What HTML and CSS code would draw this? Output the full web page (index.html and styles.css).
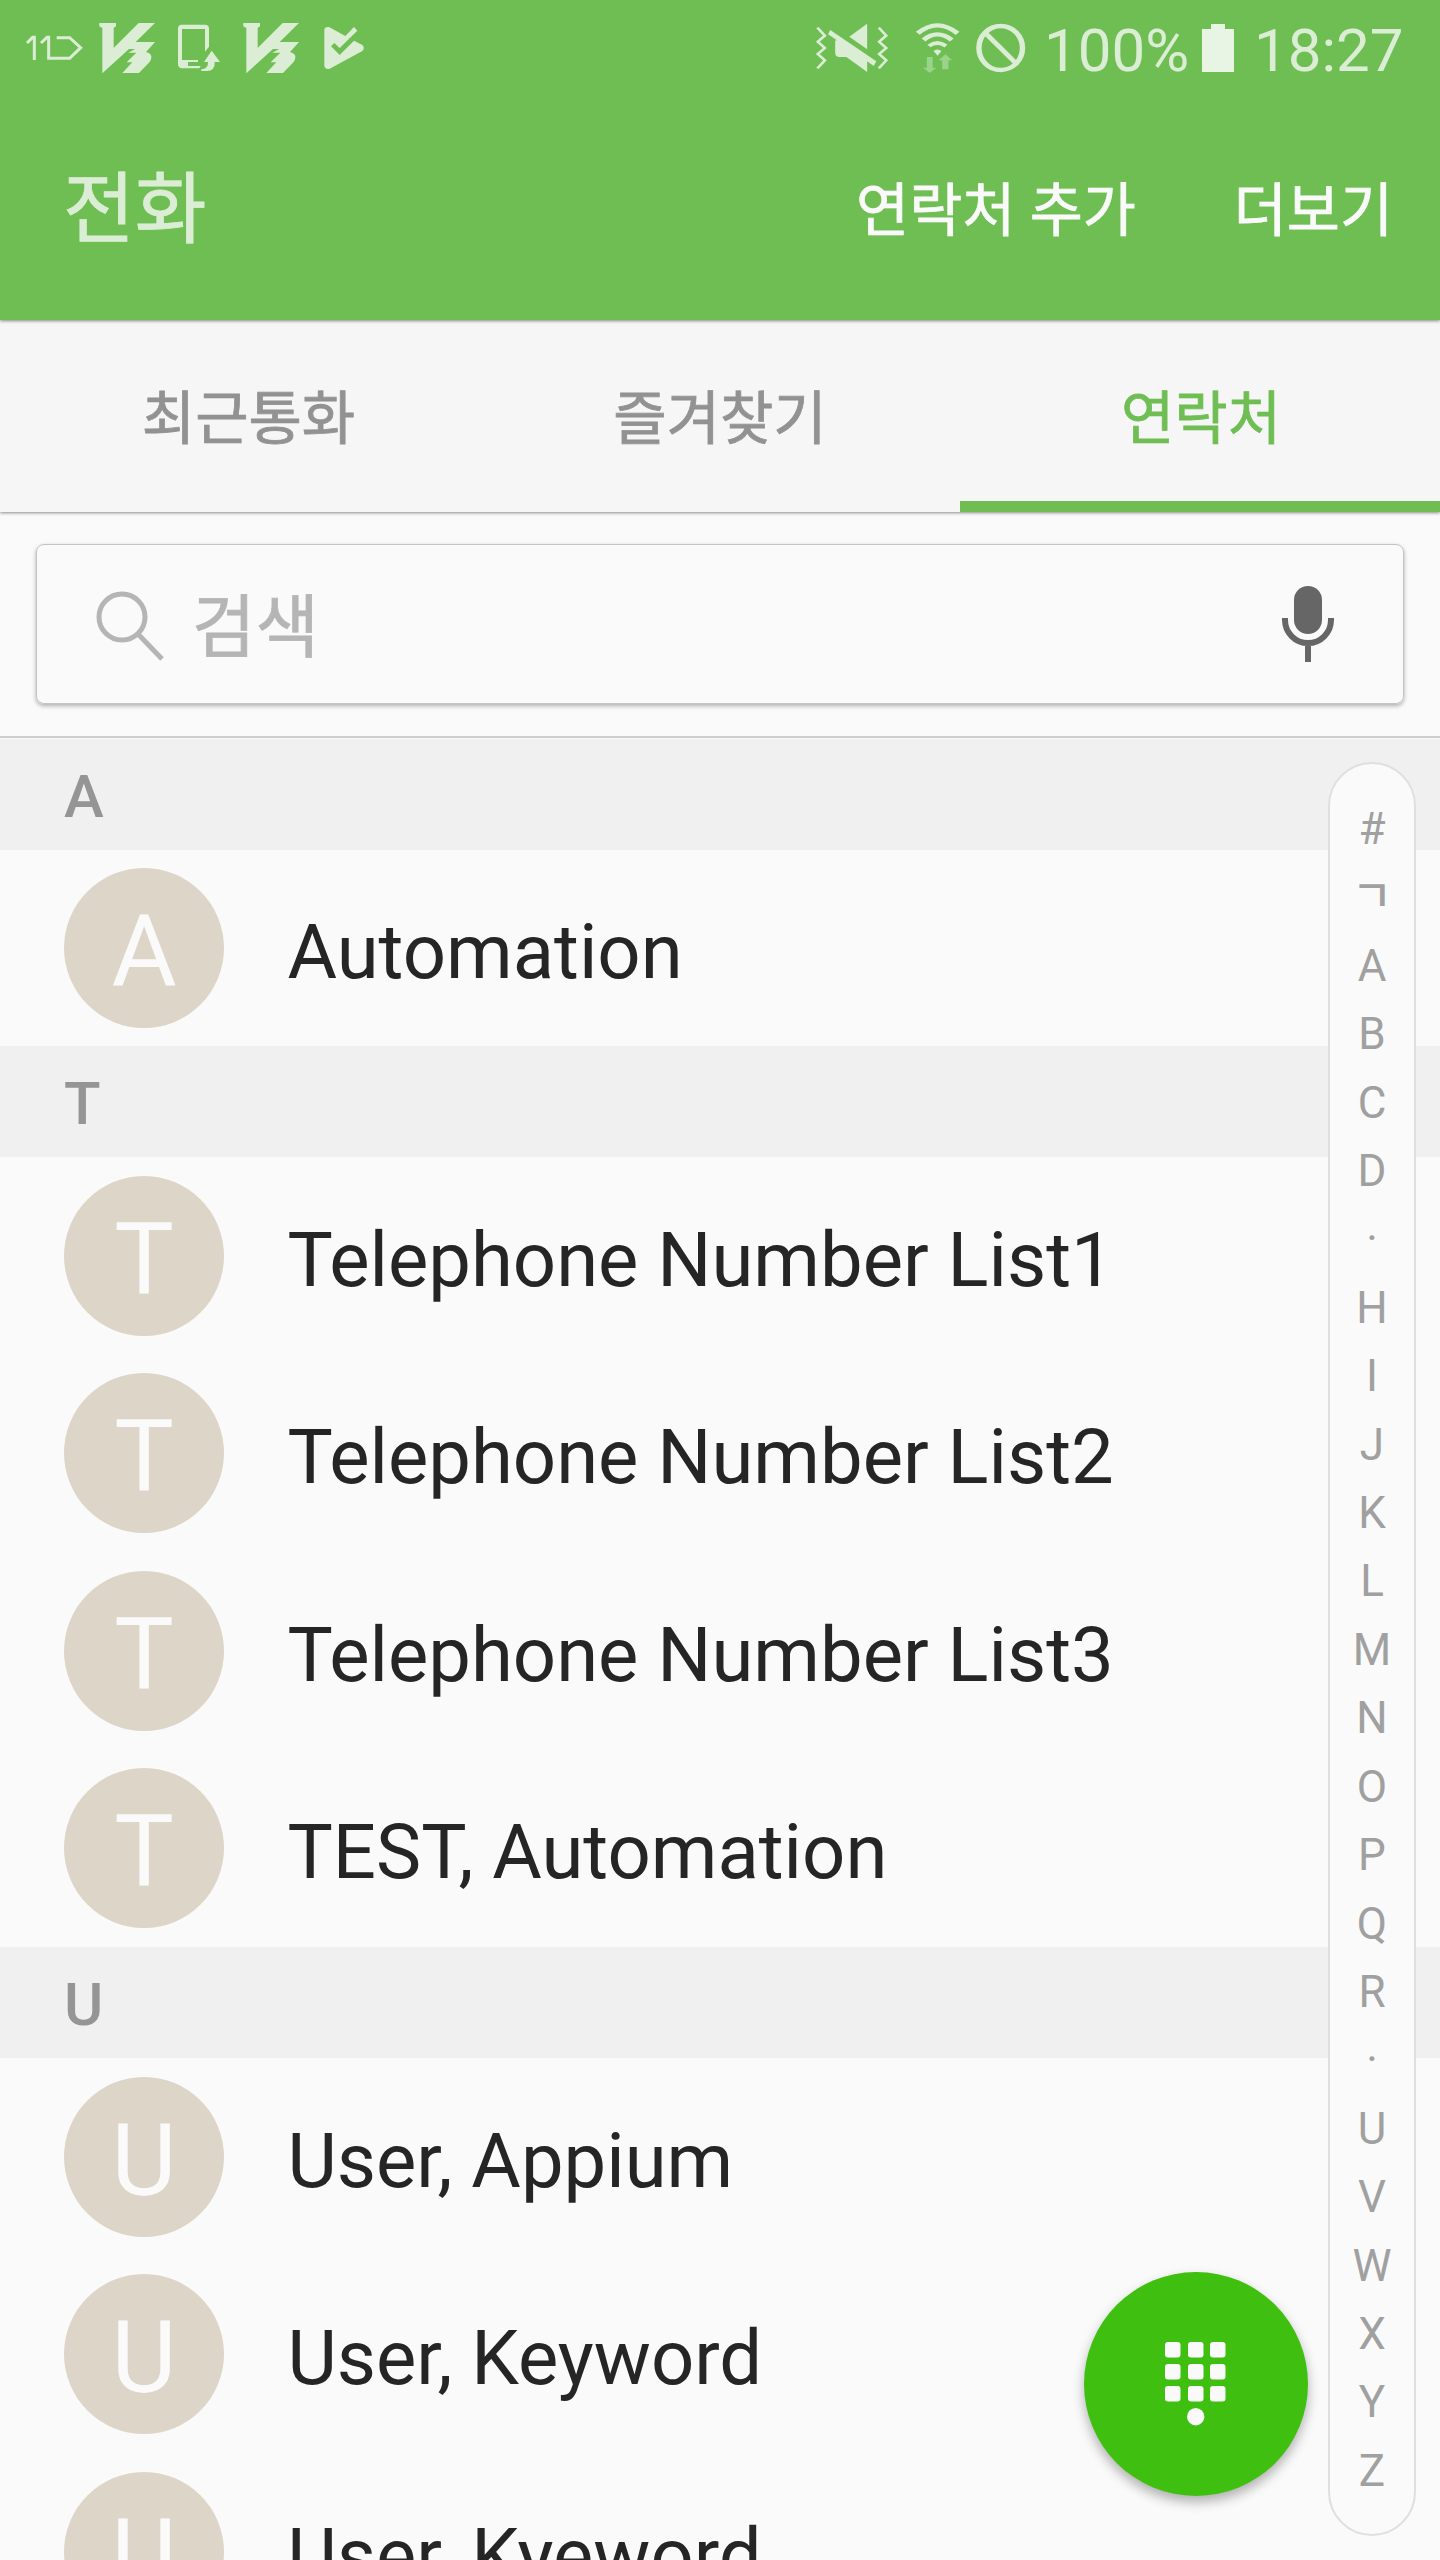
FILE: index.html
```html
<!DOCTYPE html>
<html lang="ko">
<head>
<meta charset="utf-8">
<title>전화</title>
<link rel="stylesheet" href="styles.css">
</head>
<body>
<div class="phone">
  <header class="top">
    <div class="status">
      <svg class="notifications" width="400" height="100" viewBox="0 0 1200 300">
        <g fill="none" stroke="#dbeed5" stroke-width="9">
          <path d="M81 129L98 112H103V180M123 129L141 112H146V175H209L242 143L209 113H170"/>
        </g>
        <g fill="#dbeed5">
          <path id="vs" d="M298 69H348V79L341 84V144L416 69H465L407 126H465L438 156C450 160 455 164 454 173Q453 182 446 189L417 219H367L397 187H380L409 158H385L405 147H387L307 220V84L298 79Z"/>
          <use href="#vs" x="432"/>
          <path fill-rule="evenodd" d="M545 74H615Q627 74 627 86V140L615 155V87H546V180H594V186H564V198H602L598 205H546Q534 204 534 193V86Q534 74 545 74Z"/>
          <path d="M635 152L660 186H644Q646 214 618 213H604V208Q625 207 624 186H612Z"/>
          <path d="M973 90Q974 79 987 81L1036 108L1062 81L1072 92L1019 144L1003 129L993 139L1019 165L1062 122L1087 135Q1096 144 1087 153L989 206Q976 209 973 198Z"/>
        </g>
      </svg>
      <div class="indicators">
        <svg width="236" height="100" viewBox="0 0 569 300" preserveAspectRatio="none" fill="#dbeed5">
          <g fill="none" stroke="#dbeed5" stroke-width="7">
            <path d="M66 83L84 107L67 125L84 144L67 162L84 181L66 205"/>
            <path d="M214 83L232 107L215 125L232 144L215 162L232 181L214 205"/>
          </g>
          <path d="M186 71V148L143 110ZM109 122L118 117L186 183V216L136 171H118Q109 169 109 158Z"/>
          <path d="M97 90L208 184L202 198L92 103Z"/>
          <g fill="none" stroke="#dbeed5">
            <path stroke-width="13" d="M308 100Q355 52 404 100M322 120Q355 86 390 120"/>
            <path stroke-width="11" d="M335 138Q355 120 376 138"/>
            <ellipse stroke-width="13" cx="508" cy="144" rx="52.500" ry="66"/>
            <path stroke-width="13" d="M472 100L544 189"/>
          </g>
          <path d="M346 153Q355 144 365 153L356 167Z"/>
          <path fill="#9cd38a" d="M330 171H344V203H353L337 219L321 203H330ZM375 163L391 181H382V208H367V181H358Z"/>
        </svg>
        <span class="battery-level">100%</span>
        <svg class="battery" width="32" height="48" viewBox="0 0 32 48" fill="#e8f4e4"><path d="M9 0H23V5H32V48H0V5H9Z"/></svg>
        <time>18:27</time>
      </div>
    </div>
    <div class="appbar">
      <h1>전화</h1>
      <nav class="actions"><a>연락처 추가</a><a>더보기</a></nav>
    </div>
  </header>
  <nav class="tabs">
    <a class="tab recent">최근통화</a>
    <a class="tab">즐겨찾기</a>
    <a class="tab active">연락처</a>
  </nav>
  <div class="search-area">
    <div class="search">
      <svg class="lens" width="70" height="72" viewBox="0 0 70 72" fill="none" stroke="#b5b5b5"><circle cx="26" cy="26" r="23" stroke-width="5"/><path d="M42 43L66 68" stroke-width="5"/></svg>
      <span class="hint">검색</span>
      <svg class="mic" width="54" height="76" viewBox="0 0 54 76" fill="none" stroke="#666" stroke-width="6"><rect x="13" y="0" width="28" height="48" rx="14" fill="#666" stroke="none"/><path d="M4 32V34A23 23 0 0 0 50 34V32M27 57V76"/></svg>
    </div>
  </div>
  <main class="contacts">
    <h2 class="section">A</h2>
    <div class="row single"><span class="avatar">A</span><span class="name">Automation</span></div>
    <h2 class="section">T</h2>
    <div class="row"><span class="avatar">T</span><span class="name">Telephone Number List1</span></div>
    <div class="row"><span class="avatar">T</span><span class="name">Telephone Number List2</span></div>
    <div class="row"><span class="avatar">T</span><span class="name">Telephone Number List3</span></div>
    <div class="row"><span class="avatar">T</span><span class="name">TEST, Automation</span></div>
    <h2 class="section">U</h2>
    <div class="row"><span class="avatar">U</span><span class="name">User, Appium</span></div>
    <div class="row"><span class="avatar">U</span><span class="name">User, Keyword</span></div>
    <div class="row"><span class="avatar">U</span><span class="name">User, Kyeword</span></div>
  </main>
  <div class="index">
    <span>#</span><span class="jamo">ㄱ</span><span>A</span><span>B</span><span>C</span><span>D</span><span>·</span><span>H</span><span>I</span><span>J</span><span>K</span><span>L</span><span>M</span><span>N</span><span>O</span><span>P</span><span>Q</span><span>R</span><span>·</span><span>U</span><span>V</span><span>W</span><span>X</span><span>Y</span><span>Z</span>
  </div>
  <button class="dial" aria-label="키패드">
    <svg width="62" height="84" viewBox="0 0 62 84" fill="#fafafa">
      <rect x="0" y="0" width="15.500" height="15.500" rx="3"/><rect x="23" y="0" width="15.500" height="15.500" rx="3"/><rect x="45" y="0" width="15.500" height="15.500" rx="3"/>
      <rect x="0" y="22" width="15.500" height="15.500" rx="3"/><rect x="23" y="22" width="15.500" height="15.500" rx="3"/><rect x="45" y="22" width="15.500" height="15.500" rx="3"/>
      <rect x="0" y="44" width="15.500" height="15.500" rx="3"/><rect x="23" y="44" width="15.500" height="15.500" rx="3"/><rect x="45" y="44" width="15.500" height="15.500" rx="3"/>
      <circle cx="30.700" cy="74.700" r="8.700"/>
    </svg>
  </button>
</div>
</body>
</html>
```
FILE: styles.css
```css
* { box-sizing: border-box; }
body {
  margin: 0;
  font-family: Roboto, "Noto Sans CJK KR", sans-serif;
  background: #fafafa;
}
h1, h2 { margin: 0; font-weight: 400; }
.phone {
  position: relative;
  width: 1440px;
  height: 2560px;
  overflow: hidden;
  background: #fafafa;
}
.top {
  position: relative;
  height: 320px;
  background: #6fbe53;
  box-shadow: 0 1px 3px rgba(0, 0, 0, .45);
  z-index: 1;
}
.status {
  display: flex;
  justify-content: space-between;
  height: 100px;
  color: #dbeed5;
}
.indicators {
  display: flex;
  align-items: flex-start;
  width: 650px;
  font-size: 60px;
  line-height: 101px;
}
.battery-level { width: 154px; padding-left: 18px; }
.battery-level, time { white-space: nowrap; }
.battery { margin: 24px 20px 0 22px; }
.appbar {
  display: flex;
  justify-content: space-between;
  align-items: center;
  height: 222px;
  padding: 0 47px 0 63px;
}
.appbar h1 {
  font-size: 78px;
  -webkit-text-stroke: .8px currentColor;
  line-height: 100px;
  color: #dbeed5;
}
.actions {
  display: flex;
  gap: 98px;
  font-size: 57.700px;
  -webkit-text-stroke: .8px currentColor;
  line-height: 100px;
  color: #fafafa;
}
.tabs {
  position: relative;
  display: grid;
  grid-template-columns: repeat(3, 1fr);
  height: 192px;
  background: #f6f6f6;
  box-shadow: 0 1px 3px rgba(0, 0, 0, .45);
}
.tab {
  display: flex;
  align-items: center;
  justify-content: center;
  font-size: 58px;
  -webkit-text-stroke: .8px currentColor;
  line-height: 100px;
  color: #929292;
  padding-top: 17px;
  border-bottom: 11px solid transparent;
}
.tab.recent { padding-left: 17px; }
.tab.active {
  color: #6fbe53;
  border-bottom-color: #6fbe53;
  padding-left: 2px;
}
.search-area {
  height: 226px;
  padding: 32px 36px 0;
  border-bottom: 2px solid #cdcdcd;
}
.search {
  display: flex;
  align-items: center;
  height: 160px;
  padding: 0 68px 0 59px;
  border: 1px solid #c4c4c4;
  border-radius: 8px;
  box-shadow: 0 2px 4px rgba(0, 0, 0, .3);
}
.lens { margin-top: 6px; }
.hint {
  flex: 1;
  margin-left: 26px;
  padding-top: 9px;
  font-size: 69px;
  -webkit-text-stroke: .8px currentColor;
  line-height: 100px;
  color: #b5b5b5;
}
.contacts { padding-top: 1px; }
.section {
  height: 111px;
  padding-left: 64px;
  background: #f0f0f0;
  color: #959595;
  font-size: 60px;
  font-weight: 500;
  line-height: 116px;
}
.row {
  display: flex;
  height: 197.500px;
  padding: 18.500px 0 0 64px;
}
.row.single { height: 196px; padding-top: 18px; }
.avatar {
  width: 160px;
  height: 160px;
  border-radius: 50%;
  background: #dcd5c8;
  color: #fafafa;
  font-size: 100px;
  line-height: 167px;
  text-align: center;
}
.name {
  margin-left: 63.500px;
  font-size: 76px;
  line-height: 168px;
  color: #252525;
}
.index {
  position: absolute;
  left: 1328px;
  top: 762px;
  width: 88px;
  height: 1774px;
  padding-top: 31px;
  border: 2px solid #dfdfdf;
  border-radius: 44px;
  background: #fafafa;
  color: #a0a0a0;
  display: flex;
  flex-direction: column;
  align-items: center;
  font-size: 44px;
}
.index span { height: 68.420px; line-height: 68px; }
.index .jamo { font-weight: 500; }
.dial {
  position: absolute;
  left: 1084px;
  top: 2272px;
  width: 224px;
  height: 224px;
  padding: 0;
  border: 0;
  border-radius: 50%;
  background: #3fbf10;
  box-shadow: 0 6px 12px rgba(0, 0, 0, .3);
  display: flex;
  align-items: center;
  justify-content: center;
}
```
